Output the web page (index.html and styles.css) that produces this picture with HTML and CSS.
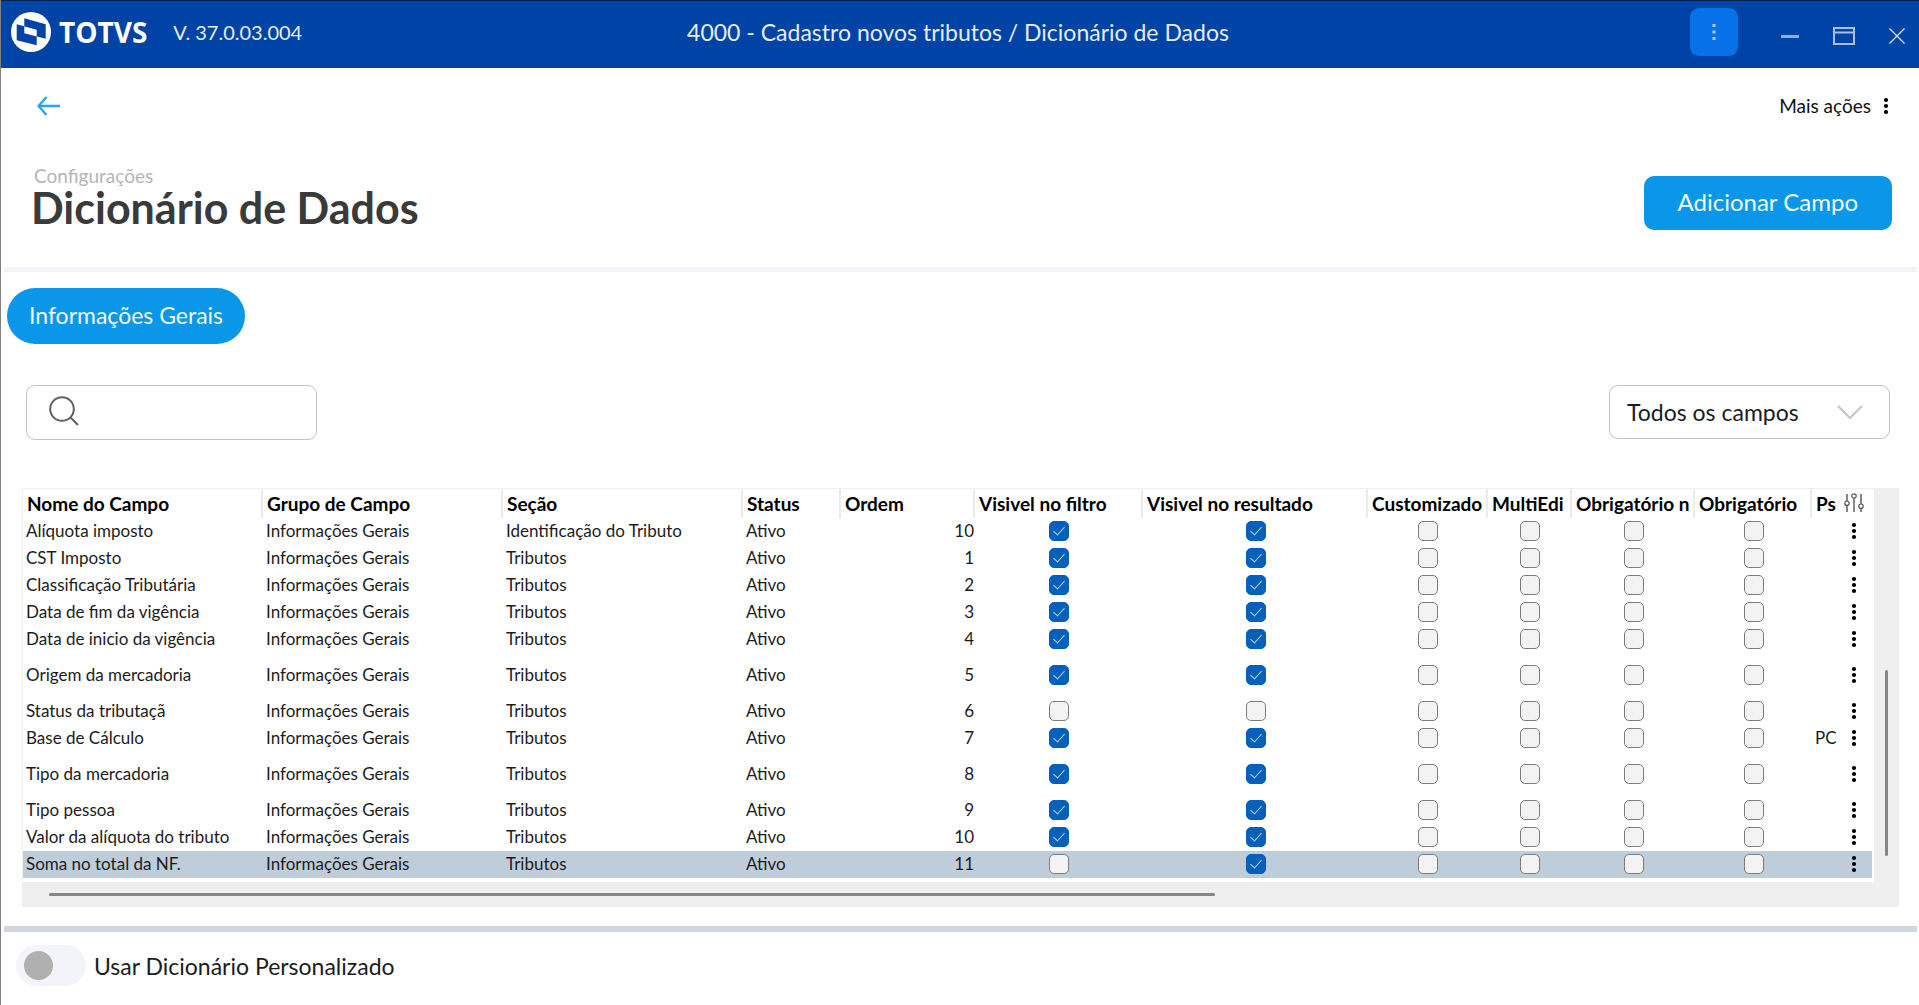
FILE: index.html
```html
<!DOCTYPE html>
<html lang="pt-BR">
<head>
<meta charset="utf-8">
<title>Dicionário de Dados</title>
<link rel="stylesheet" href="styles.css">
</head>
<body>
<svg class="defs" aria-hidden="true">
  <symbol id="dots" viewBox="0 0 6 18"><circle cx="3" cy="3" r="2.1"/><circle cx="3" cy="9" r="2.1"/><circle cx="3" cy="15" r="2.1"/></symbol>
</svg>
<header class="titlebar">
  <div class="brand">
    <svg class="brand-mark" viewBox="0 0 40 40" aria-hidden="true"><circle cx="20" cy="20" r="20" fill="#fff"/><path fill="#0043a6" fill-rule="evenodd" d="M13.3 6.3 34.7 12.3V26.7L13.3 21.3ZM5.7 12.3 25.7 17.7V33.3L5.7 28.3Z"/></svg>
    <span class="brand-name">TOTVS</span>
    <span class="version">V. 37.0.03.004</span>
  </div>
  <h2 class="window-title">4000 - Cadastro novos tributos / Dicionário de Dados</h2>
  <div class="window-controls">
    <button class="window-menu" aria-label="Menu"><svg width="4" height="18" viewBox="0 0 4 18"><path fill="#a9cdf8" d="M.5 1h3v3h-3zM.5 7.5h3v3h-3zM.5 14h3v3h-3z"/></svg></button>
    <button aria-label="Minimizar"><svg width="18" height="18" viewBox="0 0 18 18"><path d="M0 9.500h18" stroke="#8fadd9" stroke-width="3"/></svg></button>
    <button aria-label="Restaurar"><svg width="22" height="18" viewBox="0 0 22 18"><path d="M1 1h20v16H1zM1 5.500h20" fill="none" stroke="#a9c0e2" stroke-width="2"/></svg></button>
    <button aria-label="Fechar"><svg width="16" height="16" viewBox="0 0 16 16"><path d="M.500.500l15 15M15.500.500l-15 15" stroke="#d3dff0" stroke-width="1.400"/></svg></button>
  </div>
</header>
<main>
  <div class="toolbar">
    <button class="back" aria-label="Voltar"><svg width="24" height="20" viewBox="0 0 24 20"><path d="M1.500 10H23M9.500 1 1.500 10l8 9" fill="none" stroke="#2ba4ee" stroke-width="2.400"/></svg></button>
    <button class="more">Mais ações <svg width="6" height="18"><use href="#dots"/></svg></button>
  </div>
  <div class="page-head">
    <div>
      <p class="crumb">Configurações</p>
      <h1>Dicionário de Dados</h1>
    </div>
    <button class="primary">Adicionar Campo</button>
  </div>
  <nav class="tabs"><button class="tab">Informações Gerais</button></nav>
  <div class="filters">
    <label class="search">
      <svg width="30" height="30" viewBox="0 0 30 30" aria-hidden="true"><circle cx="13" cy="13" r="11.800"/><path d="M21.500 21.500 29 29"/></svg>
      <input type="search" aria-label="Pesquisar">
    </label>
    <div class="select">
      <select aria-label="Filtrar campos"><option>Todos os campos</option></select>
      <svg width="26" height="14" viewBox="0 0 26 14" aria-hidden="true"><path d="M1 1l12 12L25 1"/></svg>
    </div>
  </div>
  <div class="grid">
    <div class="grid-body">
      <table>
        <colgroup><col><col class="c-text"><col class="c-text"><col class="c-status"><col class="c-order"><col class="c-filter"><col class="c-result"><col class="c-custom"><col class="c-multi"><col class="c-req1"><col class="c-req2"><col class="c-search"><col class="c-actions"></colgroup>
        <thead>
          <tr><th><span>Nome do Campo</span></th><th><span>Grupo de Campo</span></th><th><span>Seção</span></th><th><span>Status</span></th><th><span>Ordem</span></th><th><span>Visivel no filtro</span></th><th><span>Visivel no resultado</span></th><th><span>Customizado</span></th><th><span>MultiEdi</span></th><th><span>Obrigatório n</span></th><th><span>Obrigatório</span></th><th><span>Ps</span></th>
          <th class="act"><button aria-label="Configurar colunas"><svg width="20" height="20" viewBox="0 0 20 20"><path d="M3 1v7M3 12.500V19M10 5v14M17 1v10M17 15.500V19" stroke="#555" stroke-width="1.400"/><g fill="#fff" stroke="#555" stroke-width="1.200"><circle cx="3" cy="10.200" r="2.200"/><circle cx="10" cy="3" r="2.200"/><circle cx="17" cy="13.200" r="2.200"/></g></svg></button></th></tr>
        </thead>
        <tbody>
          <tr><td>Alíquota imposto</td><td>Informações Gerais</td><td>Identificação do Tributo</td><td>Ativo</td><td class="num">10</td><td class="chk"><input type="checkbox" aria-label="Visivel no filtro" checked></td><td class="chk"><input type="checkbox" aria-label="Visivel no resultado" checked></td><td class="chk"><input type="checkbox" aria-label="Customizado"></td><td class="chk"><input type="checkbox" aria-label="MultiEdi"></td><td class="chk"><input type="checkbox" aria-label="Obrigatório n"></td><td class="chk"><input type="checkbox" aria-label="Obrigatório"></td><td></td><td class="act"><button aria-label="Ações"><svg width="6" height="18"><use href="#dots"/></svg></button></td></tr>
          <tr><td>CST Imposto</td><td>Informações Gerais</td><td>Tributos</td><td>Ativo</td><td class="num">1</td><td class="chk"><input type="checkbox" aria-label="Visivel no filtro" checked></td><td class="chk"><input type="checkbox" aria-label="Visivel no resultado" checked></td><td class="chk"><input type="checkbox" aria-label="Customizado"></td><td class="chk"><input type="checkbox" aria-label="MultiEdi"></td><td class="chk"><input type="checkbox" aria-label="Obrigatório n"></td><td class="chk"><input type="checkbox" aria-label="Obrigatório"></td><td></td><td class="act"><button aria-label="Ações"><svg width="6" height="18"><use href="#dots"/></svg></button></td></tr>
          <tr><td>Classificação Tributária</td><td>Informações Gerais</td><td>Tributos</td><td>Ativo</td><td class="num">2</td><td class="chk"><input type="checkbox" aria-label="Visivel no filtro" checked></td><td class="chk"><input type="checkbox" aria-label="Visivel no resultado" checked></td><td class="chk"><input type="checkbox" aria-label="Customizado"></td><td class="chk"><input type="checkbox" aria-label="MultiEdi"></td><td class="chk"><input type="checkbox" aria-label="Obrigatório n"></td><td class="chk"><input type="checkbox" aria-label="Obrigatório"></td><td></td><td class="act"><button aria-label="Ações"><svg width="6" height="18"><use href="#dots"/></svg></button></td></tr>
          <tr><td>Data de fim da vigência</td><td>Informações Gerais</td><td>Tributos</td><td>Ativo</td><td class="num">3</td><td class="chk"><input type="checkbox" aria-label="Visivel no filtro" checked></td><td class="chk"><input type="checkbox" aria-label="Visivel no resultado" checked></td><td class="chk"><input type="checkbox" aria-label="Customizado"></td><td class="chk"><input type="checkbox" aria-label="MultiEdi"></td><td class="chk"><input type="checkbox" aria-label="Obrigatório n"></td><td class="chk"><input type="checkbox" aria-label="Obrigatório"></td><td></td><td class="act"><button aria-label="Ações"><svg width="6" height="18"><use href="#dots"/></svg></button></td></tr>
          <tr><td>Data de inicio da vigência</td><td>Informações Gerais</td><td>Tributos</td><td>Ativo</td><td class="num">4</td><td class="chk"><input type="checkbox" aria-label="Visivel no filtro" checked></td><td class="chk"><input type="checkbox" aria-label="Visivel no resultado" checked></td><td class="chk"><input type="checkbox" aria-label="Customizado"></td><td class="chk"><input type="checkbox" aria-label="MultiEdi"></td><td class="chk"><input type="checkbox" aria-label="Obrigatório n"></td><td class="chk"><input type="checkbox" aria-label="Obrigatório"></td><td></td><td class="act"><button aria-label="Ações"><svg width="6" height="18"><use href="#dots"/></svg></button></td></tr>
          <tr class="tall"><td>Origem da mercadoria</td><td>Informações Gerais</td><td>Tributos</td><td>Ativo</td><td class="num">5</td><td class="chk"><input type="checkbox" aria-label="Visivel no filtro" checked></td><td class="chk"><input type="checkbox" aria-label="Visivel no resultado" checked></td><td class="chk"><input type="checkbox" aria-label="Customizado"></td><td class="chk"><input type="checkbox" aria-label="MultiEdi"></td><td class="chk"><input type="checkbox" aria-label="Obrigatório n"></td><td class="chk"><input type="checkbox" aria-label="Obrigatório"></td><td></td><td class="act"><button aria-label="Ações"><svg width="6" height="18"><use href="#dots"/></svg></button></td></tr>
          <tr><td>Status da tributaçã</td><td>Informações Gerais</td><td>Tributos</td><td>Ativo</td><td class="num">6</td><td class="chk"><input type="checkbox" aria-label="Visivel no filtro"></td><td class="chk"><input type="checkbox" aria-label="Visivel no resultado"></td><td class="chk"><input type="checkbox" aria-label="Customizado"></td><td class="chk"><input type="checkbox" aria-label="MultiEdi"></td><td class="chk"><input type="checkbox" aria-label="Obrigatório n"></td><td class="chk"><input type="checkbox" aria-label="Obrigatório"></td><td></td><td class="act"><button aria-label="Ações"><svg width="6" height="18"><use href="#dots"/></svg></button></td></tr>
          <tr><td>Base de Cálculo</td><td>Informações Gerais</td><td>Tributos</td><td>Ativo</td><td class="num">7</td><td class="chk"><input type="checkbox" aria-label="Visivel no filtro" checked></td><td class="chk"><input type="checkbox" aria-label="Visivel no resultado" checked></td><td class="chk"><input type="checkbox" aria-label="Customizado"></td><td class="chk"><input type="checkbox" aria-label="MultiEdi"></td><td class="chk"><input type="checkbox" aria-label="Obrigatório n"></td><td class="chk"><input type="checkbox" aria-label="Obrigatório"></td><td>PC</td><td class="act"><button aria-label="Ações"><svg width="6" height="18"><use href="#dots"/></svg></button></td></tr>
          <tr class="tall"><td>Tipo da mercadoria</td><td>Informações Gerais</td><td>Tributos</td><td>Ativo</td><td class="num">8</td><td class="chk"><input type="checkbox" aria-label="Visivel no filtro" checked></td><td class="chk"><input type="checkbox" aria-label="Visivel no resultado" checked></td><td class="chk"><input type="checkbox" aria-label="Customizado"></td><td class="chk"><input type="checkbox" aria-label="MultiEdi"></td><td class="chk"><input type="checkbox" aria-label="Obrigatório n"></td><td class="chk"><input type="checkbox" aria-label="Obrigatório"></td><td></td><td class="act"><button aria-label="Ações"><svg width="6" height="18"><use href="#dots"/></svg></button></td></tr>
          <tr><td>Tipo pessoa</td><td>Informações Gerais</td><td>Tributos</td><td>Ativo</td><td class="num">9</td><td class="chk"><input type="checkbox" aria-label="Visivel no filtro" checked></td><td class="chk"><input type="checkbox" aria-label="Visivel no resultado" checked></td><td class="chk"><input type="checkbox" aria-label="Customizado"></td><td class="chk"><input type="checkbox" aria-label="MultiEdi"></td><td class="chk"><input type="checkbox" aria-label="Obrigatório n"></td><td class="chk"><input type="checkbox" aria-label="Obrigatório"></td><td></td><td class="act"><button aria-label="Ações"><svg width="6" height="18"><use href="#dots"/></svg></button></td></tr>
          <tr><td>Valor da alíquota do tributo</td><td>Informações Gerais</td><td>Tributos</td><td>Ativo</td><td class="num">10</td><td class="chk"><input type="checkbox" aria-label="Visivel no filtro" checked></td><td class="chk"><input type="checkbox" aria-label="Visivel no resultado" checked></td><td class="chk"><input type="checkbox" aria-label="Customizado"></td><td class="chk"><input type="checkbox" aria-label="MultiEdi"></td><td class="chk"><input type="checkbox" aria-label="Obrigatório n"></td><td class="chk"><input type="checkbox" aria-label="Obrigatório"></td><td></td><td class="act"><button aria-label="Ações"><svg width="6" height="18"><use href="#dots"/></svg></button></td></tr>
          <tr class="selected"><td>Soma no total da NF.</td><td>Informações Gerais</td><td>Tributos</td><td>Ativo</td><td class="num">11</td><td class="chk"><input type="checkbox" aria-label="Visivel no filtro"></td><td class="chk"><input type="checkbox" aria-label="Visivel no resultado" checked></td><td class="chk"><input type="checkbox" aria-label="Customizado"></td><td class="chk"><input type="checkbox" aria-label="MultiEdi"></td><td class="chk"><input type="checkbox" aria-label="Obrigatório n"></td><td class="chk"><input type="checkbox" aria-label="Obrigatório"></td><td></td><td class="act"><button aria-label="Ações"><svg width="6" height="18"><use href="#dots"/></svg></button></td></tr>
        </tbody>
      </table>
    </div>
    <div class="scroll-v"><div class="thumb"></div></div>
    <div class="scroll-h"><div class="thumb"></div></div>
  </div>
</main>
<footer>
  <label class="toggle"><input type="checkbox" role="switch"> Usar Dicionário Personalizado</label>
</footer>
</body>
</html>
```
FILE: styles.css
```css
* { box-sizing: border-box; }

body {
  margin: 0;
  min-height: 100vh;
  border-left: 1px solid #808080;
  background: #fff;
  color: #1c1c1c;
  font: 17px/26px Lato, "Liberation Sans", sans-serif;
}

h1, h2, p { margin: 0; }

button, input, select { margin: 0; font: inherit; color: inherit; }

button {
  display: inline-flex;
  align-items: center;
  justify-content: center;
  padding: 0;
  border: 0;
  background: none;
  white-space: nowrap;
}

svg { flex: none; display: block; }

.defs { position: absolute; width: 0; height: 0; }

/* Window title bar */
.titlebar {
  display: grid;
  grid-template-columns: 1fr auto 1fr;
  align-items: center;
  height: 68px;
  margin-left: -1px;
  padding: 0 14px 6px 11px;
  border-top: 1px solid #04204f;
  background: #0043a6;
  color: #e6edf7;
}

.brand { display: flex; align-items: center; }
.brand-mark { width: 40px; height: 40px; }

.brand-name {
  margin-left: 8px;
  color: #fff;
  font: 700 28px/40px "Open Sans", "Noto Sans", sans-serif;
}

.version { margin-left: 26px; font-size: 20px; }
.window-title { font-size: 23px; font-weight: 400; }

.window-controls {
  display: flex;
  align-items: center;
  justify-content: flex-end;
}

.window-controls button + button { margin: 9px 0 0 34px; }

.window-menu {
  width: 48px;
  height: 48px;
  margin-right: 9px;
  border-radius: 9px;
  background: #0771e9;
}

/* Page header */
.toolbar {
  display: flex;
  align-items: center;
  justify-content: space-between;
  height: 76px;
  padding: 0 30px 0 36px;
}

.more { gap: 12px; font-size: 19px; color: #111; }

.page-head {
  display: flex;
  align-items: flex-end;
  justify-content: space-between;
  margin: 0 2px 0 3px;
  padding: 22px 25px 37px 27px;
  border-bottom: 5px solid #f3f4f9;
}

.crumb { padding-left: 3px; font-size: 19px; line-height: 20px; color: #b5b5b5; }
h1 { font-size: 43px; line-height: 44px; font-weight: 700; color: #3a3a3a; }

.primary {
  height: 54px;
  padding: 0 34px 2px;
  border-radius: 10px;
  background: #0a97ea;
  color: #f1f9fe;
  font-size: 24px;
}

.tabs { margin: 16px 6px 0; }

.tab {
  height: 56px;
  padding: 0 22px 2px;
  border-radius: 28px;
  background: #0a97ea;
  color: #f1f9fe;
  font-size: 23px;
}

/* Search and filter */
.filters {
  display: flex;
  align-items: flex-start;
  justify-content: space-between;
  margin: 41px 29px 0 25px;
}

.search {
  display: flex;
  align-items: center;
  gap: 12px;
  width: 291px;
  height: 55px;
  padding: 0 12px 4px 22px;
  border: 1px solid #c3c3c3;
  border-radius: 9px;
}

.search svg { fill: none; stroke: #5f5f5f; stroke-width: 2; }

.search input {
  flex: 1;
  min-width: 0;
  border: 0;
  outline: 0;
  background: none;
  appearance: none;
}

.select { display: grid; align-items: center; width: 281px; height: 54px; }
.select > * { grid-area: 1 / 1; }

.select select {
  width: 100%;
  height: 100%;
  padding: 0 50px 0 17px;
  border: 1px solid #c3c3c3;
  border-radius: 9px;
  background: #fff;
  font-size: 23px;
  appearance: none;
}

.select svg {
  justify-self: end;
  margin-right: 27px;
  fill: none;
  stroke: #c3c3c3;
  stroke-width: 2;
  pointer-events: none;
}

/* Data grid */
.grid {
  display: grid;
  grid-template-columns: 1fr 25px;
  margin: 48px 20px 0 21px;
}

.grid-body {
  min-width: 0;
  padding: 0 2px 4px 0;
  border: solid #f0f0f0;
  border-width: 1px 0 0 1px;
}

table { width: 100%; border-collapse: collapse; table-layout: fixed; }

.c-text { width: 240px; }
.c-status { width: 98px; }
.c-order { width: 134px; }
.c-filter { width: 168px; }
.c-result { width: 225px; }
.c-custom { width: 120px; }
.c-multi { width: 84px; }
.c-req1 { width: 123px; }
.c-req2 { width: 117px; }
.c-search { width: 24px; }
.c-actions { width: 36px; }

th {
  height: 29px;
  padding: 0 3px 0 4px;
  background: linear-gradient(#ebebeb, #ebebeb) right / 2px 100% no-repeat;
  color: #000;
  font-size: 19px;
  font-weight: 700;
  text-align: left;
}

th:nth-last-child(-n+2) { padding-right: 0; background: none; }
th span { display: block; overflow: hidden; white-space: nowrap; }

td { height: 27px; padding: 0 0 1px 3px; overflow: hidden; white-space: nowrap; }
.tall td { height: 45px; }
.selected { background: #bfccda; }
.num { padding: 0 1px 1px; text-align: right; }
.chk, th.act, .act { padding: 0 0 1px; text-align: center; }
.chk input, .act button { display: flex; margin: 0 auto; }

.chk input {
  align-items: center;
  justify-content: center;
  width: 20px;
  height: 20px;
  border: 1px solid #7d7d7d;
  border-radius: 5px;
  background: #f3f3f3;
  appearance: none;
}

.chk input:checked { border-color: #0560bc; background: #0560bc; }

.chk input:checked::before {
  content: "";
  width: 5px;
  height: 10px;
  margin-bottom: 3px;
  border: solid #b9d3ec;
  border-width: 0 1px 1px 0;
  transform: rotate(42deg);
}

.scroll-v, .scroll-h { display: grid; place-items: center; background: #efefef; }
.scroll-v { grid-template-rows: 182fr 186fr 26fr; }
.scroll-h { grid-column: 1 / -1; grid-template-columns: 27fr 1166fr 684fr; height: 25px; }
.thumb { border-radius: 2px; background: #868686; }
.scroll-v .thumb { grid-row: 2; width: 3px; height: 100%; }
.scroll-h .thumb { grid-column: 2; width: 100%; height: 3px; }

/* Footer */
footer {
  margin: 19px 2px 0 3px;
  padding: 13px 12px 19px;
  border-top: 6px solid #d0d5df;
}

.toggle { display: inline-flex; align-items: center; gap: 8px; font-size: 23px; }

.toggle input {
  display: flex;
  align-items: center;
  width: 70px;
  height: 41px;
  padding: 0 8px;
  border-radius: 21px;
  background: #f3f4f9;
  appearance: none;
}

.toggle input::before {
  content: "";
  width: 29px;
  height: 29px;
  border-radius: 50%;
  background: #b0b0b0;
}
```
